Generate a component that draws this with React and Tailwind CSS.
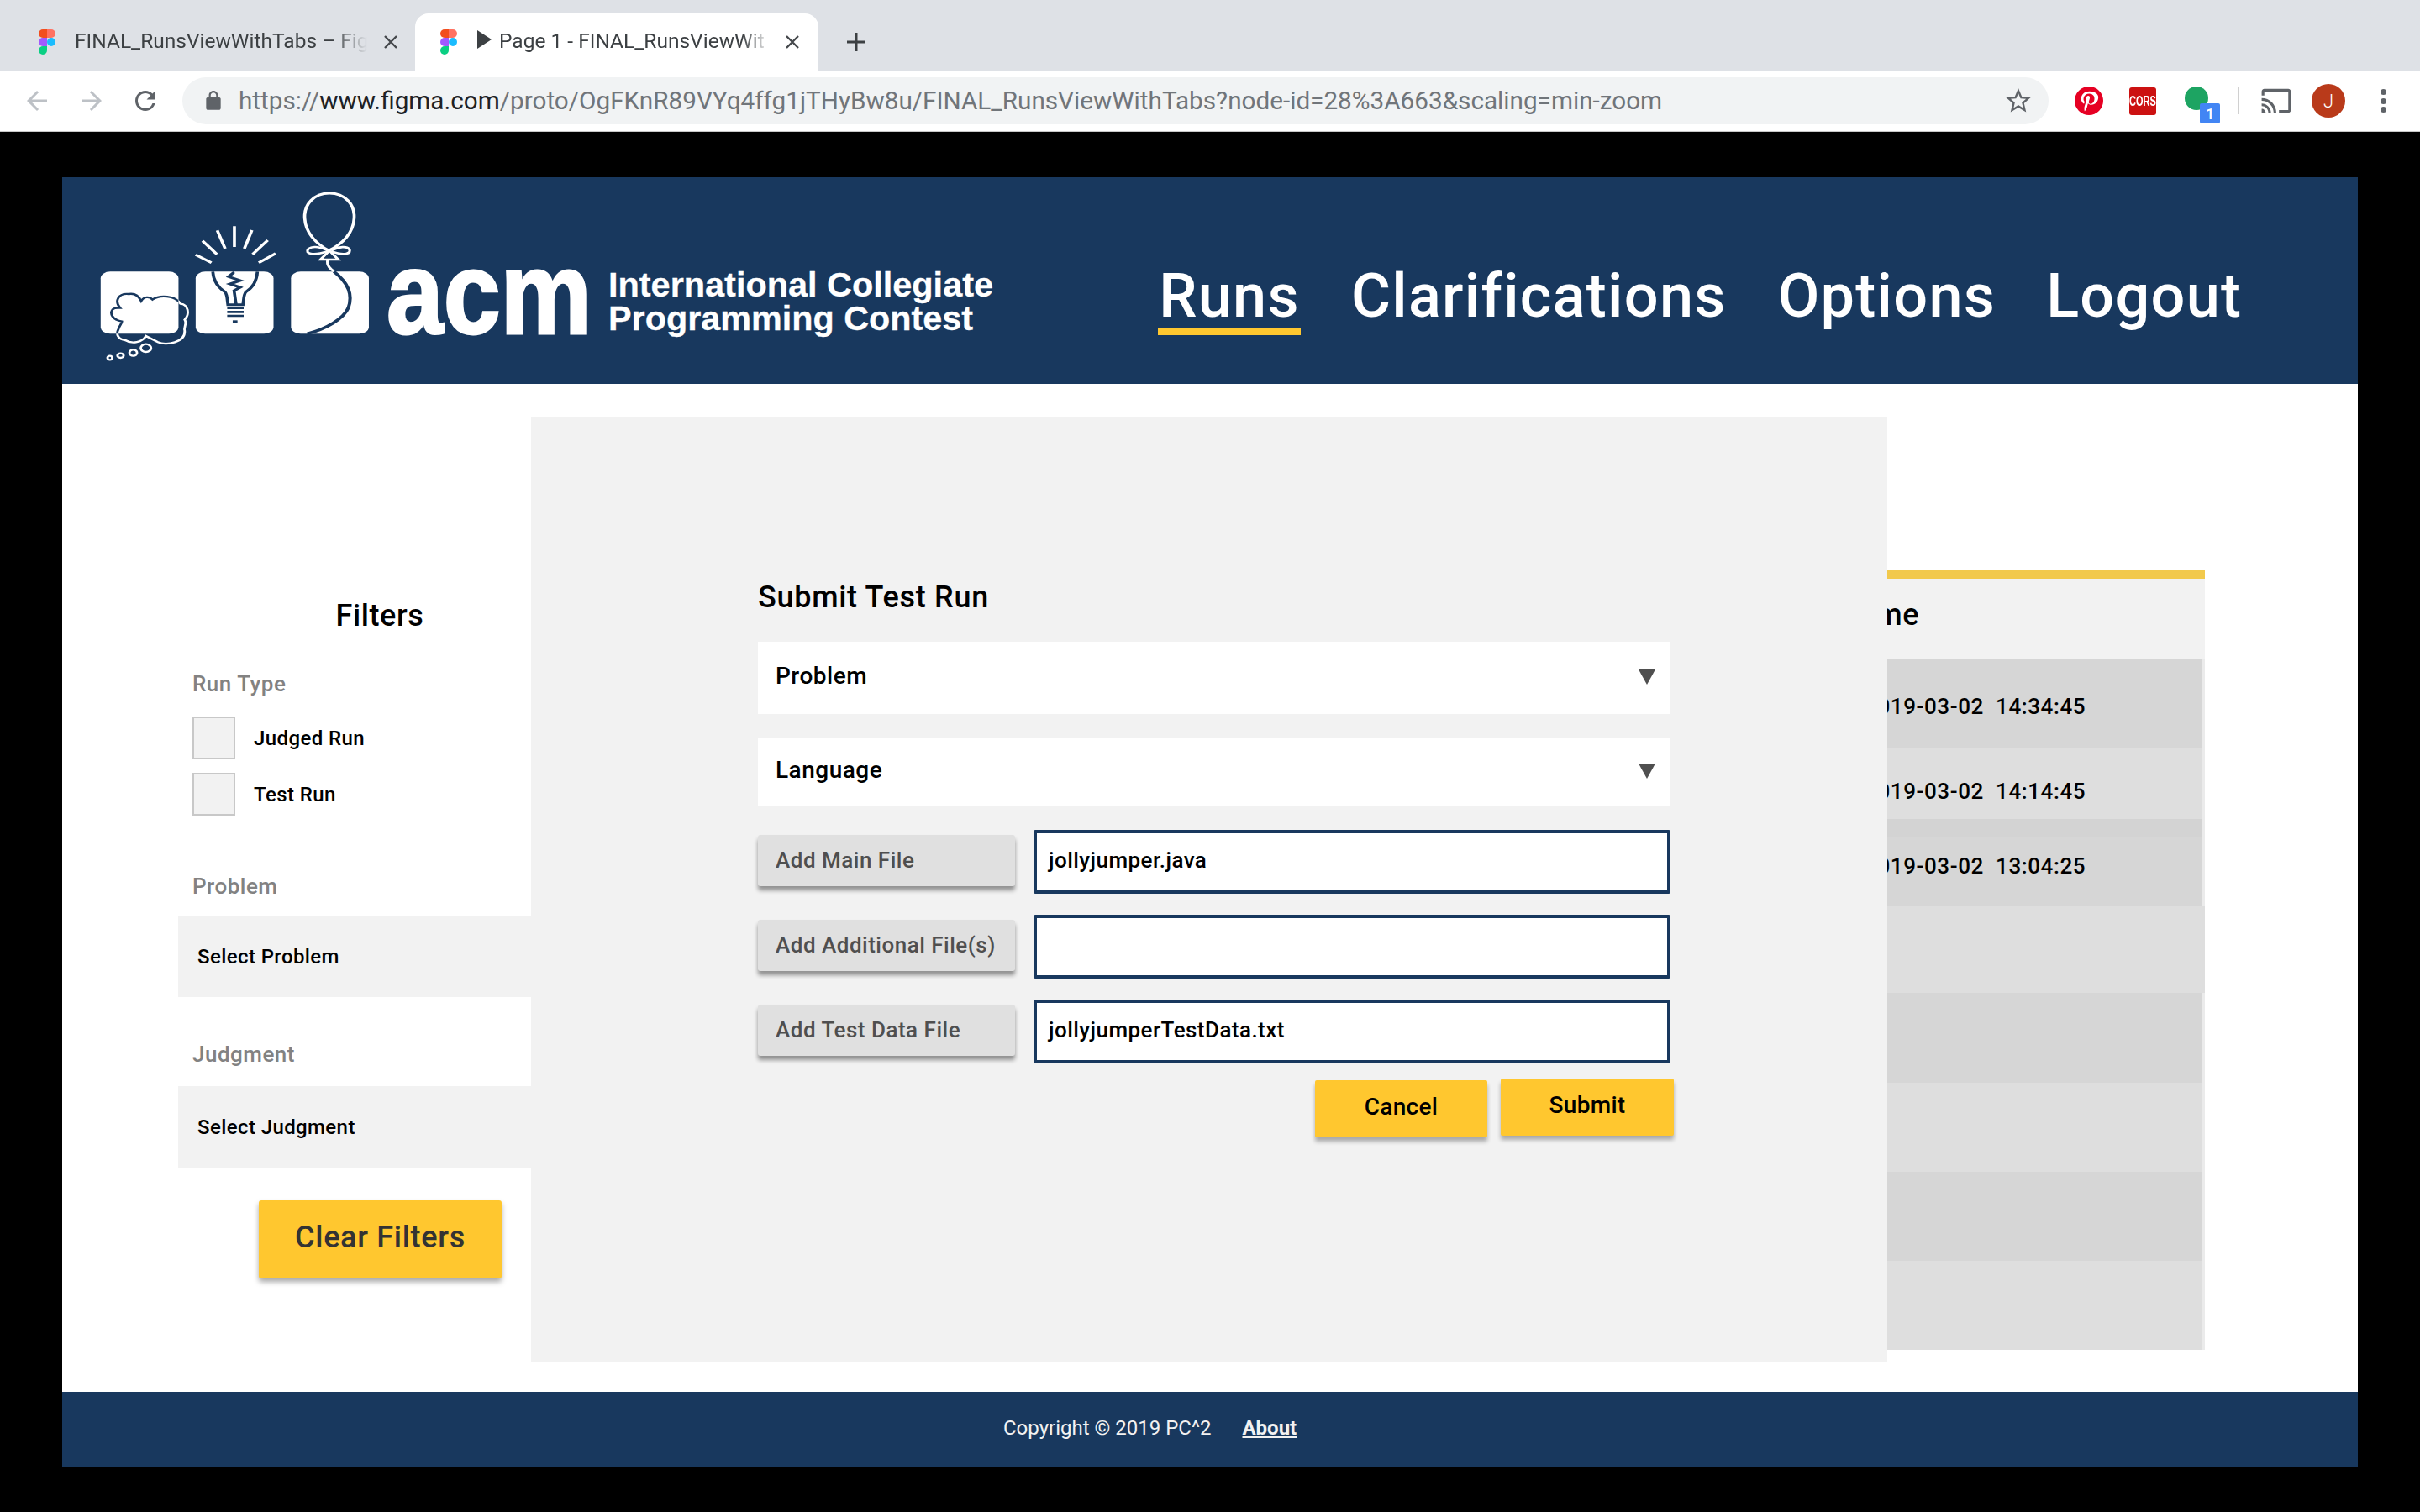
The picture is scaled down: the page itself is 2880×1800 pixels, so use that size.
import React from "react";

const roboto = "font-['Roboto',sans-serif]";
const navyBg = "bg-[#18385e]";

function FigmaIcon() {
  return (
    <svg width="20" height="30" viewBox="0 0 20 30" className="shrink-0">
      <path d="M0 5a5 5 0 0 1 5-5h5v10H5a5 5 0 0 1-5-5z" fill="#f24e1e" />
      <path d="M10 0h5a5 5 0 0 1 0 10h-5z" fill="#ff7262" />
      <path d="M0 15a5 5 0 0 1 5-5h5v10H5a5 5 0 0 1-5-5z" fill="#a259ff" />
      <circle cx="15" cy="15" r="5" fill="#1abcfe" />
      <path d="M0 25a5 5 0 0 1 5-5h5v5a5 5 0 0 1-10 0z" fill="#0acf83" />
    </svg>
  );
}

function TabClose() {
  return (
    <svg width="18" height="18" viewBox="0 0 18 18" className="shrink-0">
      <path d="M2 2l14 14M16 2L2 16" stroke="#45484c" strokeWidth="2.4" fill="none" />
    </svg>
  );
}

function MatIcon({ d, size = 36, color = "#5f6368", className = "" }) {
  return (
    <svg width={size} height={size} viewBox="0 0 24 24" className={className}>
      <path d={d} fill={color} />
    </svg>
  );
}

function ChromeBar() {
  return (
    <div className={`${roboto} shrink-0`}>
      <div className="h-[84px] bg-[#dee1e6] flex items-end">
        <div className="h-[68px] w-[494px] flex items-center pl-[46px] pb-[1px]">
          <FigmaIcon />
          <div className="ml-[23px] w-[348px] whitespace-nowrap text-[24.5px] text-[#3c4043] [mask-image:linear-gradient(to_right,black_88%,transparent)]">
            FINAL_RunsViewWithTabs – Fig
          </div>
          <div className="ml-[19px]">
            <TabClose />
          </div>
        </div>
        <div className="h-[68px] w-[480px] bg-white rounded-t-[16px] flex items-center pl-[30px] pb-[1px]">
          <FigmaIcon />
          <div className="ml-[24px] w-0 h-0 border-y-[11px] border-y-transparent border-l-[17px] border-l-[#3c4043] -translate-y-[3px]" />
          <div className="ml-[9px] w-[322px] whitespace-nowrap text-[24.5px] text-[#3c4043] [mask-image:linear-gradient(to_right,black_90%,transparent)]">
            Page 1 - FINAL_RunsViewWit
          </div>
          <div className="ml-[18px]">
            <TabClose />
          </div>
        </div>
        <div className="h-[68px] flex items-center pl-[34px] pb-[1px]">
          <svg width="22" height="22" viewBox="0 0 22 22">
            <path d="M11 0v22M0 11h22" stroke="#3c4043" strokeWidth="3" />
          </svg>
        </div>
      </div>
      <div className="h-[73px] bg-white flex items-center border-b-[1px] border-[#c8c8c8] relative">
        <MatIcon className="ml-[26px]" d="M20 11H7.830l5.590-5.590L12 4l-8 8 8 8 1.410-1.410L7.830 13H20v-2z" color="#bdc1c6" />
        <MatIcon className="ml-[29px]" d="M4 11h12.170l-5.590-5.590L12 4l8 8-8 8-1.410-1.410L16.170 13H4v-2z" color="#bdc1c6" />
        <MatIcon className="ml-[28px]" d="M17.650 6.350A7.958 7.958 0 0 0 12 4c-4.420 0-7.990 3.580-7.990 8s3.570 8 7.990 8c3.730 0 6.840-2.550 7.730-6h-2.080A5.990 5.990 0 0 1 12 18c-3.310 0-6-2.690-6-6s2.690-6 6-6c1.660 0 3.140.690 4.220 1.780L13 11h7V4l-2.350 2.350z" />
        <div className="ml-[26px] w-[2221px] h-[56px] rounded-full bg-[#f1f3f4] flex items-center pl-[24px]">
          <MatIcon size={26} d="M18 8h-1V6c0-2.760-2.240-5-5-5S7 3.240 7 6v2H6c-1.100 0-2 .9-2 2v10c0 1.100.9 2 2 2h12c1.100 0 2-.9 2-2V10c0-1.100-.9-2-2-2zm-9-2c0-1.660 1.340-3 3-3s3 1.340 3 3v2H9V6z" />
          <div className="ml-[17px] text-[29.7px] text-[#70757a] whitespace-nowrap flex-1">
            https://<span className="text-[#202124]">www.figma.com</span>/proto/OgFKnR89VYq4ffg1jTHyBw8u/FINAL_RunsViewWithTabs?node-id=28%3A663&amp;scaling=min-zoom
          </div>
          <MatIcon size={36} className="mr-[18px]" d="M22 9.240l-7.190-.620L12 2 9.190 8.630 2 9.240l5.460 4.730L5.820 21 12 17.270 18.180 21l-1.630-7.030L22 9.240zM12 15.400l-3.760 2.270 1-4.280-3.320-2.880 4.380-.380L12 6.100l1.710 4.040 4.380.380-3.320 2.880 1 4.280L12 15.400z" />
        </div>
        <svg width="34" height="34" viewBox="0 0 32 32" className="ml-[31px]">
          <circle cx="16" cy="16" r="16" fill="#e60023" />
          <path d="M16.600 5.500c-6 0-9.300 4-9.300 8.300 0 2 1.100 4.600 2.900 5.400.5.200.4 0 .9-1.700 0-.2 0-.4-.1-.5-2.500-3-.5-9 5.300-9 8.400 0 6.800 11.500 1.500 11.500-1.400 0-2.400-1.100-2-2.500.4-1.600 1.200-3.400 1.200-4.600 0-3-4.400-2.600-4.400 1.500 0 1.300.4 2.100.4 2.100L11 22.600c-.4 1.800 0 4.700.1 4.900 0 .1.200.2.3 0 .2-.2 2.100-3.100 2.600-5 .2-.7 1-3.700 1-3.700.5 1 2 1.700 3.500 1.700 4.700 0 8-4.300 8-8.300 0-3.900-4.100-6.700-9.900-6.700z" fill="#fff" />
        </svg>
        <div className="ml-[31px] w-[32px] h-[33px] rounded-[3px] bg-[#cc1111] flex items-center justify-center text-white font-['Liberation_Sans',sans-serif]">
          <span className="text-[11px] font-bold scale-y-150">CORS</span>
        </div>
        <div className="ml-[34px] w-[28px] h-[32px] relative -translate-y-[1px]">
          <div className="w-[28px] h-[28px] rounded-full bg-[#1da462]" />
          <div className="absolute left-[18px] top-[20px] w-[24px] h-[24px] rounded-[2px] bg-[#4285f4] text-white text-[18px] font-medium flex items-center justify-center">
            1
          </div>
        </div>
        <div className="ml-[35px] w-[2px] h-[32px] bg-[#d0d0d0]" />
        <MatIcon size={38} className="ml-[25px]" d="M21 3H3c-1.100 0-2 .9-2 2v3h2V5h18v14h-7v2h7c1.100 0 2-.9 2-2V5c0-1.100-.9-2-2-2zM1 18v3h3c0-1.660-1.340-3-3-3zm0-4v2c2.760 0 5 2.240 5 5h2c0-3.870-3.130-7-7-7zm0-4v2c4.970 0 9 4.030 9 9h2c0-6.080-4.930-11-11-11z" />
        <div className="ml-[23px] w-[40px] h-[40px] rounded-full bg-[#b93a1a] text-white text-[22px] font-light flex items-center justify-center">
          J
        </div>
        <div className="ml-[42px] flex flex-col gap-[3.5px]">
          <div className="w-[7px] h-[7px] rounded-full bg-[#5f6368]" />
          <div className="w-[7px] h-[7px] rounded-full bg-[#5f6368]" />
          <div className="w-[7px] h-[7px] rounded-full bg-[#5f6368]" />
        </div>
      </div>
    </div>
  );
}

function Logo() {
  const navy = "#18385e";
  const cloud = "M130 470C112 445 125 416 155 420C175 416 186 432 191 445C200 428 215 428 224 440C245 422 290 424 306 455C328 458 334 490 318 512C326 525 314 540 318 552C320 592 265 606 240 592L205 570C195 592 165 600 145 585C125 582 116 565 125 545C128 532 135 525 135 518C108 512 98 490 108 475C113 468 125 470 130 470Z";
  return (
    <svg width="1100" height="240" viewBox="0 0 1100 240" className="ml-[16px] shrink-0">
      <defs>
        <clipPath id="sq1">
          <rect x="73" y="340" width="227" height="222" rx="28" ry="24" />
        </clipPath>
      </defs>
      <g transform="translate(0 -1) scale(0.40816 0.33333)">
        <rect x="73" y="340" width="227" height="222" rx="28" ry="24" fill="#fff" />
        <rect x="350" y="340" width="227" height="222" rx="28" ry="24" fill="#fff" />
        <rect x="628" y="340" width="227" height="222" rx="28" ry="24" fill="#fff" />
        <path d={cloud} fill="none" stroke="#fff" strokeWidth="7" />
        <path d={cloud} fill="none" stroke={navy} strokeWidth="7" clipPath="url(#sq1)" />
        <ellipse cx="205" cy="613" rx="15" ry="14" fill="none" stroke="#fff" strokeWidth="7" />
        <ellipse cx="168" cy="630" rx="11" ry="11" fill="none" stroke="#fff" strokeWidth="7" />
        <ellipse cx="131" cy="640" rx="9" ry="8" fill="none" stroke="#fff" strokeWidth="7" />
        <ellipse cx="100" cy="648" rx="7" ry="7" fill="none" stroke="#fff" strokeWidth="7" />

        <g stroke="#fff" strokeWidth="9" fill="none">
          <path d="M463 178V252M413 193L436 258M370 230L412 278M350 280L396 308M514 192L492 258M560 228L516 278M583 275L534 308" />
        </g>
        <g stroke={navy} strokeWidth="9" fill="none">
          <path d="M400 340C402 380 420 400 435 412C442 420 442 440 444 458H488C490 440 490 420 497 412C512 400 528 380 530 340" />
          <path d="M462 342L446 358L480 372L450 384L480 396L462 408L468 458" />
          <path d="M442 470H490M442 484H490M442 498H490" strokeWidth="8" />
          <path d="M458 518H472" strokeWidth="8" />
        </g>

        <path d="M740 60C695 60 665 100 668 150C670 200 700 240 738 265C780 240 810 200 812 150C815 100 785 60 740 60Z" fill="none" stroke="#fff" strokeWidth="9" />
        <path d="M740 265L714 297H766Z" fill="none" stroke="#fff" strokeWidth="8" />
        <path d="M735 265C710 250 690 248 678 260C668 275 690 285 735 268M745 265C770 250 790 248 798 260C805 275 785 285 745 268" fill="none" stroke="#fff" strokeWidth="8" />
        <path d="M735 297C730 318 745 334 755 340" fill="none" stroke="#fff" strokeWidth="8" />
        <path d="M753 340C790 375 810 420 795 470C780 510 730 545 675 562" fill="none" stroke={navy} strokeWidth="10" />
      </g>
      <text x="370" y="186" fontFamily="'Liberation Sans',sans-serif" fontWeight="700" fontSize="140" fill="#fff" stroke="#fff" strokeWidth="3" textLength="244" lengthAdjust="spacingAndGlyphs">acm</text>
      <text x="634" y="142" fontFamily="'Liberation Sans',sans-serif" fontWeight="700" fontSize="41" fill="#fff" stroke="#fff" strokeWidth="0.3" textLength="458" lengthAdjust="spacingAndGlyphs">International Collegiate</text>
      <text x="634" y="182" fontFamily="'Liberation Sans',sans-serif" fontWeight="700" fontSize="41" fill="#fff" stroke="#fff" strokeWidth="0.3" textLength="434" lengthAdjust="spacingAndGlyphs">Programming Contest</text>
    </svg>
  );
}

function Header() {
  return (
    <div className={`h-[246px] ${navyBg} flex shrink-0`}>
      <Logo />
      <div className={`${roboto} flex text-white text-[72px] font-medium tracking-[1.3px] leading-none`}>
        <div className="ml-[188px] mt-[104px] flex flex-col items-center w-[170px]">
          <span className="h-[76px] leading-[76px]">Runs</span>
          <div className="w-[170px] h-[8px] bg-[#ffc72f]" />
        </div>
        <div className="ml-[60px] mt-[104px] leading-[76px]">Clarifications</div>
        <div className="ml-[61px] mt-[104px] leading-[76px]">Options</div>
        <div className="ml-[60px] mt-[104px] leading-[76px]">Logout</div>
      </div>
    </div>
  );
}

function Check({ label, className = "" }) {
  return (
    <div className={`flex items-center ${className}`}>
      <div className="w-[51px] h-[51px] bg-[#f2f2f2] border-2 border-[#c8c8c8]" />
      <span className="ml-[22px] text-[24px] font-medium text-black tracking-[0.4px]">{label}</span>
    </div>
  );
}

function Sidebar() {
  return (
    <div className="w-[558px] shrink-0 flex flex-col pl-[138px] text-black">
      <div className="mt-[255px] h-[42px] leading-[42px] text-[36px] font-medium text-center w-[350px] ml-[65px] tracking-[0.6px]">Filters</div>
      <div className="mt-[45px] pl-[17px] text-[26px] font-medium leading-[30px] text-[#828282] tracking-[0.5px]">Run Type</div>
      <Check className="mt-[24px] ml-[17px]" label="Judged Run" />
      <Check className="mt-[16px] ml-[17px]" label="Test Run" />
      <div className="mt-[69px] pl-[17px] text-[26px] font-medium leading-[30px] text-[#828282] tracking-[0.5px]">Problem</div>
      <div className="mt-[20px] h-[97px] bg-[#f2f2f2] flex items-center pl-[23px] text-[24px] font-medium tracking-[0.4px]">Select Problem</div>
      <div className="mt-[53px] pl-[17px] text-[26px] font-medium leading-[30px] text-[#828282] tracking-[0.5px]">Judgment</div>
      <div className="mt-[23px] h-[97px] bg-[#f2f2f2] flex items-center pl-[23px] text-[24px] font-medium tracking-[0.4px]">Select Judgment</div>
      <button className="mt-[39px] ml-[96px] w-[289px] h-[93px] rounded-[3px] bg-[#ffc72f] text-[#333333] text-[36px] font-medium tracking-[0.7px] shadow-[0_4px_6px_rgba(0,0,0,0.35)] pb-[6px]">
        Clear Filters
      </button>
    </div>
  );
}

const rows = [
  { h: "h-[105px]", bg: "bg-[#d6d6d6]", t: "2019-03-02  14:34:45", pad: "pt-[7px]" },
  { h: "h-[85px]", bg: "bg-[#dedede]", t: "2019-03-02  14:14:45", pad: "pt-[19px]" },
  { h: "h-[21px]", bg: "bg-[#d3d3d3]", t: "" },
  { h: "h-[82px]", bg: "bg-[#d6d6d6]", t: "2019-03-02  13:04:25", pad: "pb-[12px]" },
  { h: "h-[104px]", bg: "bg-[#dedede]", t: "", full: true },
  { h: "h-[107px]", bg: "bg-[#d6d6d6]", t: "" },
  { h: "h-[106px]", bg: "bg-[#dedede]", t: "" },
  { h: "h-[106px]", bg: "bg-[#d6d6d6]", t: "" },
  { h: "h-[106px]", bg: "bg-[#dedede]", t: "" },
];

function RunsTable() {
  return (
    <div className="w-[1992px] shrink-0 pt-[221px] flex flex-col">
      <div className="h-[11px] bg-[#f2c94c]" />
      <div className="h-[96px] bg-[#f2f2f2] flex items-center pl-[1500px] text-[36px] font-medium text-black tracking-[0.6px] pb-[10px]">
        <span className="ml-[68px]">Time</span>
      </div>
      <div className="bg-[#ebebeb]">
        {rows.map((r, i) => (
          <div key={i} className={`${r.h} ${r.bg} ${r.full ? "" : "mr-[4px]"} flex items-center pl-[1587px] ${r.pad || ""}`}>
            {r.t && (
              <span className="text-[26px] font-medium text-black tracking-[0.6px] whitespace-pre">{r.t}</span>
            )}
          </div>
        ))}
      </div>
    </div>
  );
}

function FileRow({ label, value, className = "" }) {
  return (
    <div className={`flex items-start ${className}`}>
      <button className="mt-[6px] w-[306px] h-[61px] rounded-[3px] bg-[#e0e0e0] text-left pl-[21px] text-[26px] font-medium text-[#4f4f4f] shadow-[0_5px_5px_rgba(0,0,0,0.4)] tracking-[0.5px]">
        {label}
      </button>
      <div className="ml-[22px] w-[758px] h-[76px] bg-white border-[4px] border-[#18385e] rounded-[2px] flex items-center pl-[14px] text-[26px] font-medium text-black tracking-[0.45px] pb-[4px]">
        {value}
      </div>
    </div>
  );
}

function SelectRow({ label, className = "" }) {
  return (
    <div className={`w-[1086px] bg-white flex items-center justify-between pl-[21px] pr-[18px] text-[28px] font-medium text-black tracking-[0.5px] ${className}`}>
      <span className="-translate-y-[2px]">{label}</span>
      <div className="w-0 h-0 border-x-[10px] border-x-transparent border-t-[18px] border-t-[#4f4f4f] -translate-y-[1px]" />
    </div>
  );
}

function Modal() {
  return (
    <div className="absolute left-[558px] top-[40px] w-[1614px] h-[1124px] bg-[#f2f2f2] pl-[270px] flex flex-col text-black">
      <div className="mt-[193px] h-[42px] leading-[42px] text-[36px] font-medium tracking-[0.7px]">Submit Test Run</div>
      <SelectRow label="Problem" className="mt-[32px] h-[86px]" />
      <SelectRow label="Language" className="mt-[28px] h-[82px]" />
      <FileRow className="mt-[28px]" label="Add Main File" value="jollyjumper.java" />
      <FileRow className="mt-[25px]" label="Add Additional File(s)" value="" />
      <FileRow className="mt-[25px]" label="Add Test Data File" value="jollyjumperTestData.txt" />
      <div className="w-[1090px] flex justify-end items-start gap-[16px] mt-[18px] text-[28px] font-medium tracking-[0.3px]">
        <button className="mt-[2px] w-[205px] h-[68px] rounded-[2px] bg-[#ffc72f] shadow-[0_5px_5px_rgba(0,0,0,0.3)] pb-[4px]">Cancel</button>
        <button className="w-[206px] h-[68px] rounded-[2px] bg-[#ffc72f] shadow-[0_5px_5px_rgba(0,0,0,0.3)] pb-[4px]">Submit</button>
      </div>
    </div>
  );
}

function Footer() {
  return (
    <div className={`h-[90px] ${navyBg} shrink-0 flex items-center pl-[1120px] text-[24px] text-[#f2f2f2] pb-[4px]`}>
      <span>Copyright © 2019 PC^2</span>
      <span className="ml-[37px] font-bold underline">About</span>
    </div>
  );
}

export default function App() {
  return (
    <div className={`${roboto} w-[2880px] h-[1800px] bg-black flex flex-col overflow-hidden`}>
      <ChromeBar />
      <div className="mx-[74px] mt-[54px] flex flex-col">
        <Header />
        <div className="h-[1200px] bg-white relative flex overflow-hidden">
          <Sidebar />
          <RunsTable />
          <Modal />
        </div>
        <Footer />
      </div>
    </div>
  );
}
